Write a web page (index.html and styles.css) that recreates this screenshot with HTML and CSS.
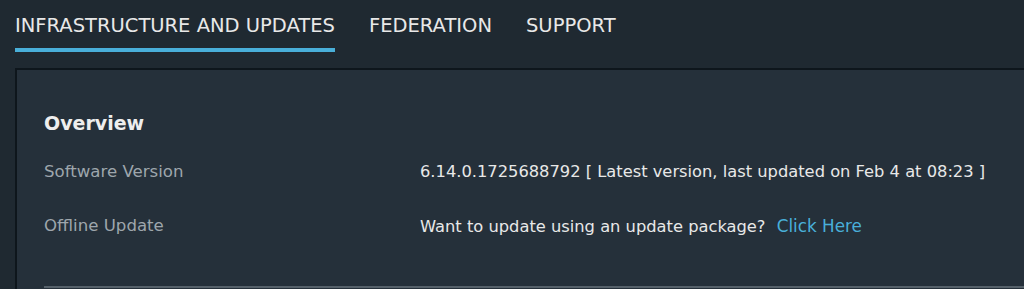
FILE: index.html
```html
<!DOCTYPE html>
<html lang="en">
<head>
    <meta charset="UTF-8">
    <title>Infrastructure and Updates</title>
    <link rel="stylesheet" href="styles.css">
</head>
<body>

<nav class="tabs">
    <a class="tab active" href="#">INFRASTRUCTURE AND UPDATES</a>
    <a class="tab" href="#">FEDERATION</a>
    <a class="tab" href="#">SUPPORT</a>
</nav>

<div class="panel">
    <h2>Overview</h2>
    <div class="row">
        <div class="label">Software Version</div>
        <div class="value">6.14.0.1725688792 [ Latest version, last updated on Feb 4 at 08:23 ]</div>
    </div>
    <div class="row">
        <div class="label">Offline Update</div>
        <div class="value">Want to update using an update package? <a href="#" class="link">Click Here</a></div>
    </div>
    <div class="divider"></div>
</div>

</body>
</html>
```

FILE: styles.css
```css
body {
    font-family: "DejaVu Sans", Verdana, sans-serif;
    background-color: #1f2931;
    color: #e6e6e6;
    margin: 0;
    padding: 0;
    overflow: hidden;
}
.tabs {
    display: flex;
    gap: 34px;
    padding: 12px 0 0 15px;
    height: 56px;
    box-sizing: border-box;
}
.tab {
    color: #e8e8e8;
    text-decoration: none;
    font-size: 19.5px;
    height: 40px;
    box-sizing: border-box;
    padding-top: 2px;
}
.tab.active {
    border-bottom: 4px solid #49afd9;
}
.panel {
    margin: 12px -10px 0 15px;
    background-color: #25303a;
    border-top: 2px solid #0e161c;
    border-left: 2px solid #0e161c;
    padding: 42px 0 0 27px;
    height: 300px;
}
.panel h2 {
    margin: 0 0 28px;
    font-size: 19px;
    font-weight: bold;
    color: #eeeeee;
}
.row {
    display: flex;
    height: 54px;
}
.label {
    width: 376px;
    font-size: 16.6px;
    color: #9ea6ac;
}
.value {
    font-size: 16.3px;
    color: #e8e8e8;
}
.link {
    color: #49afd9;
    text-decoration: none;
    font-size: 16.8px;
    margin-left: 6px;
}
.divider {
    margin-top: 16px;
    height: 2px;
    background-color: #56616a;
}
```
